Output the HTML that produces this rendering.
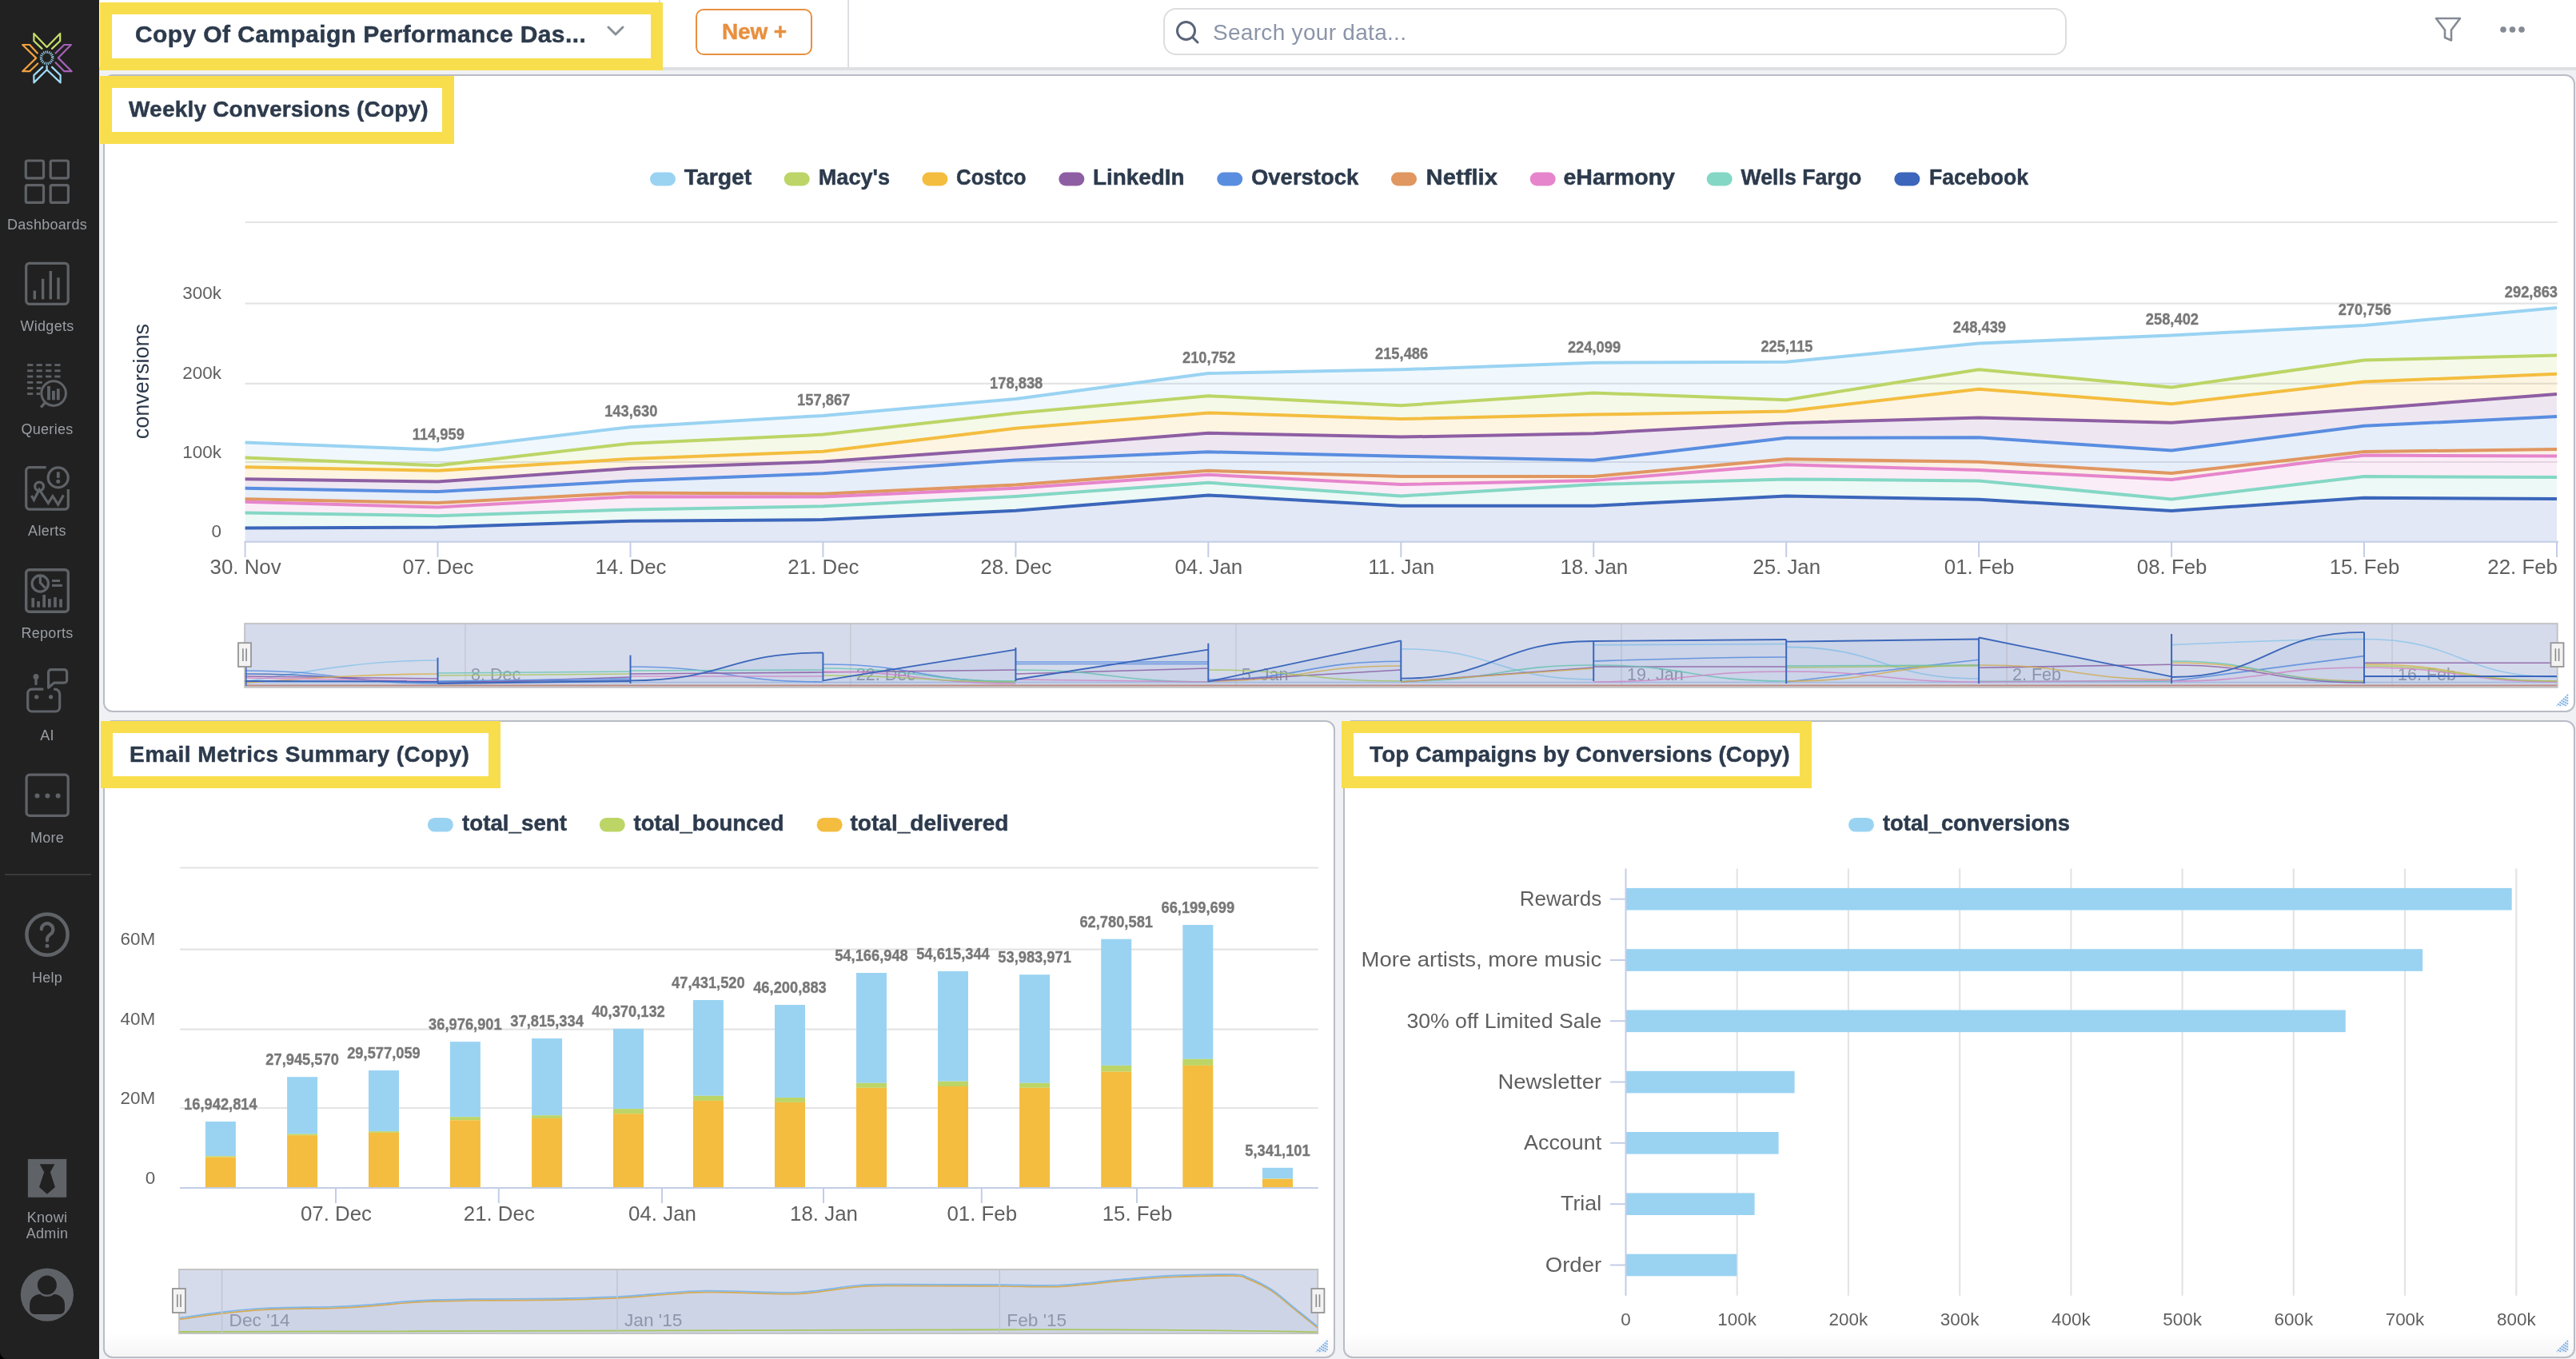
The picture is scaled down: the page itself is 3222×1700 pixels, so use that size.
<!DOCTYPE html>
<html lang="en"><head><meta charset="utf-8"><title>Copy Of Campaign Performance Dashboard</title>
<style>
html,body{margin:0;padding:0}
body{width:3222px;height:1700px;overflow:hidden;background:#f0f1f4;font-family:"Liberation Sans", Arial, sans-serif;position:relative}
.abs{position:absolute}
.gs{will-change:transform}
#side{left:0;top:0;width:124px;height:1700px;background:#212121}
#top{left:124px;top:0;width:3098px;height:84px;background:#fff}
#topsh{left:124px;top:84px;width:3098px;height:4px;background:#dfe0e4}
.widget{box-sizing:border-box;border:2px solid #b9bcc5;border-radius:12px;background:#fff}
#w2,#w3{background:linear-gradient(to bottom,#fff calc(100% - 30px),#f5f5f6 100%)}
.hl{box-sizing:border-box;border:15px solid #f8de4c;background:#fff}
.title{font-weight:700;color:#2c3a4c;white-space:nowrap;line-height:1;-webkit-text-stroke-width:0.45px}
.nav{color:#9a9fa5;font-size:18px;text-align:center;width:124px;left:-3px;line-height:20px;white-space:nowrap}
svg text{font-family:"Liberation Sans", Arial, sans-serif}

</style></head><body>
<div class="abs widget" id="w1" style="left:129px;top:93px;width:3092px;height:798px"></div>
<div class="abs widget" id="w2" style="left:129px;top:901px;width:1541px;height:798px"></div>
<div class="abs widget" id="w3" style="left:1680px;top:901px;width:1541px;height:798px"></div>
<div class="abs" id="top"></div><div class="abs" id="topsh"></div>
<div class="abs" style="left:824px;top:0;width:2px;height:84px;background:#dcdee2"></div>
<div class="abs" style="left:1060px;top:0;width:2px;height:84px;background:#dcdee2"></div>
<div class="abs hl" style="left:125.3px;top:2.5px;width:703.3000000000001px;height:85.4px"></div>
<div class="abs title gs" style="left:168.7px;top:28.3px;font-size:30px;letter-spacing:0.40px">Copy Of Campaign Performance Das...</div>
<div class="abs hl" style="left:125.3px;top:94.9px;width:442.40000000000003px;height:84.69999999999999px"></div>
<div class="abs title gs" style="left:161.4px;top:122.7px;font-size:28px;letter-spacing:0.20px">Weekly Conversions (Copy)</div>
<div class="abs hl" style="left:125.5px;top:901.6px;width:500.6px;height:84.60000000000002px"></div>
<div class="abs title gs" style="left:162px;top:929.5px;font-size:28px;letter-spacing:0.46px">Email Metrics Summary (Copy)</div>
<div class="abs hl" style="left:1677.5px;top:901.6px;width:588.6999999999998px;height:84.60000000000002px"></div>
<div class="abs title gs" style="left:1712.8px;top:929.5px;font-size:28px;letter-spacing:0.10px">Top Campaigns by Conversions (Copy)</div>
<div class="abs" style="left:870px;top:11px;width:146px;height:58px;box-sizing:border-box;border:2.5px solid #e8903f;border-radius:10px;background:#fff"></div>
<div class="abs title gs" style="left:903px;top:25.5px;font-size:28px;color:#e8903f;letter-spacing:-0.15px">New +</div>
<div class="abs" style="left:1455px;top:10px;width:1130px;height:59px;box-sizing:border-box;border:2px solid #dcdddf;border-radius:16px;background:#fff"></div>
<div class="abs gs" style="left:1517px;top:27px;font-size:28px;line-height:1;color:#8b95a9;letter-spacing:0.3px;white-space:nowrap">Search your data...</div>
<div class="abs" id="side"></div>
<div class="abs nav gs" style="top:270.7px;letter-spacing:0.3px">Dashboards</div>
<div class="abs nav gs" style="top:398.4px;letter-spacing:0.3px">Widgets</div>
<div class="abs nav gs" style="top:527.2px;letter-spacing:0.3px">Queries</div>
<div class="abs nav gs" style="top:654.3px;letter-spacing:0.3px">Alerts</div>
<div class="abs nav gs" style="top:782.2px;letter-spacing:0.3px">Reports</div>
<div class="abs nav gs" style="top:910.2px;letter-spacing:0.3px">AI</div>
<div class="abs nav gs" style="top:1038.1px;letter-spacing:0.3px">More</div>
<div class="abs nav gs" style="top:1212.7px;letter-spacing:0.3px">Help</div>
<div class="abs nav gs" style="top:1512.7px;letter-spacing:0.3px">Knowi<br>Admin</div>
<div class="abs" style="left:6px;top:1093px;width:108px;height:2px;background:#3a3a3a"></div>
<svg class="abs" style="left:0;top:0" width="3222" height="1700" viewBox="0 0 3222 1700">
<g fill="none" stroke="#8a9098" stroke-width="3" stroke-linecap="round" stroke-linejoin="round">
<path d="M761 34 L770 43 L779 34"/>
</g>
<g fill="none" stroke="#5a6478" stroke-width="3" stroke-linecap="round"><circle cx="1483.5" cy="38.5" r="11"/><path d="M1491.5 46.5 L1498 53"/></g>
<path d="M3047 23 H3077 L3066 37.5 V50.5 L3058 47 V37.5 Z" fill="none" stroke="#858b94" stroke-width="2.6" stroke-linejoin="round"/>
<g fill="#858b94"><circle cx="3131" cy="37" r="3.8"/><circle cx="3142.5" cy="37" r="3.8"/><circle cx="3154" cy="37" r="3.8"/></g>
<g fill="none" stroke-width="2.2" stroke-linejoin="round" stroke-linecap="round">
<path d="M52.5 60.9 L42.4 51.2 V41.9 L58.6 58.9 L75.2 41.9 V51.2 L65 60.9" stroke="#c6df6a"/>
<path d="M46.8 66.5 L37.1 56 H28.2 L45.2 72.6 L28.2 89.2 H37.1 L47.2 79.5" stroke="#f2a13e"/>
<path d="M69.5 66.5 L80.4 56 H88.9 L72.7 72.4 L89.7 89.2 H80.4 L69.5 78.2" stroke="#a561b7"/>
<path d="M53.3 83.9 L42.4 94.1 V103.4 L58.6 87.2 L75.6 103.4 V94.1 L65 83.9 M58.6 82.7 V87.2" stroke="#a0dcf7"/>
<circle cx="58.6" cy="72.3" r="7.2" stroke="#a0dcf7" stroke-width="3.4" stroke-dasharray="1.1 1.16" stroke-linecap="butt"/>
</g>
<g fill="none" stroke="#5f6368" stroke-width="3.2" stroke-linejoin="round" stroke-linecap="butt">
<rect x="32.3" y="201" width="22.2" height="21.8" rx="2"/>
<rect x="63.2" y="201" width="22.2" height="21.8" rx="2"/>
<rect x="32.3" y="231.6" width="22.2" height="21.8" rx="2"/>
<rect x="63.2" y="231.6" width="22.2" height="21.8" rx="2"/>
<rect x="32.7" y="329.3" width="52.5" height="51" rx="4"/>
</g>
<g fill="#5f6368">
<rect x="41.6" y="363.5" width="3.4" height="10.9"/>
<rect x="51.9" y="348.8" width="3.4" height="25.6"/>
<rect x="61.6" y="339" width="3.4" height="35.4"/>
<rect x="71.3" y="347.3" width="3.4" height="27.1"/>
<rect x="34.1" y="455.2" width="7.2" height="2.8"/>
<rect x="45.6" y="455.2" width="7.2" height="2.8"/>
<rect x="57.1" y="455.2" width="7.2" height="2.8"/>
<rect x="68.3" y="455.2" width="7.2" height="2.8"/>
<rect x="34.1" y="462.4" width="7.2" height="2.8"/>
<rect x="45.6" y="462.4" width="7.2" height="2.8"/>
<rect x="57.1" y="462.4" width="7.2" height="2.8"/>
<rect x="68.3" y="462.4" width="7.2" height="2.8"/>
<rect x="34.1" y="469.6" width="7.2" height="2.8"/>
<rect x="45.6" y="469.6" width="7.2" height="2.8"/>
<rect x="57.1" y="469.6" width="7.2" height="2.8"/>
<rect x="68.3" y="469.6" width="7.2" height="2.8"/>
<rect x="34.1" y="477" width="7.2" height="2.8"/>
<rect x="45.6" y="477" width="7.2" height="2.8"/>
<rect x="34.1" y="484.1" width="7.2" height="2.8"/>
<rect x="45.6" y="484.1" width="5.5" height="2.8"/>
<rect x="34.1" y="491.2" width="7.2" height="2.8"/>
<rect x="45.6" y="491.2" width="4.5" height="2.8"/>
<rect x="59.1" y="483" width="3.8" height="17.3"/>
<rect x="65" y="488.9" width="3.8" height="11.4"/>
<rect x="70.9" y="486.2" width="3.8" height="14.1"/>
</g>
<g fill="none" stroke="#5f6368" stroke-width="3" stroke-linecap="butt"><circle cx="67.1" cy="492.1" r="15.3"/><path d="M56.6 503.4 L51.2 509.6" stroke-width="3.4"/></g>
<g fill="none" stroke="#5f6368" stroke-width="3.2" stroke-linejoin="miter" stroke-linecap="butt">
<path d="M57.7 584.7 H36.7 a4 4 0 0 0 -4 4 V633.1 a4 4 0 0 0 4 4 H81.3 a4 4 0 0 0 4 -4 V612.1"/>
<circle cx="72.7" cy="597.4" r="12.5"/><circle cx="49.1" cy="608.5" r="5.4"/>
<path d="M39.4 620 L42.4 625.3 L49.1 612.4 L60.3 629.4 L65.9 620.6 L72.7 631.2 L79.4 619.4"/>
</g>
<g fill="#5f6368"><rect x="70.9" y="590.3" width="3.8" height="7.5"/><circle cx="72.7" cy="602.2" r="2.5"/></g>
<g fill="none" stroke="#5f6368" stroke-width="3.4" stroke-linejoin="miter" stroke-linecap="butt">
<rect x="32.7" y="712.7" width="52.6" height="52.6" rx="4"/><circle cx="50.3" cy="730" r="10.2" stroke-width="3.2"/><path d="M50.3 720 V728.8 L56.5 735.5" stroke-width="3.2"/>
</g>
<g fill="#5f6368"><rect x="65" y="725" width="10" height="3"/><rect x="65" y="730.9" width="13" height="3"/>
<rect x="39.4" y="748" width="3.7" height="11.7"/>
<rect x="46.2" y="752.1" width="3.7" height="7.6"/>
<rect x="53.3" y="744.1" width="3.7" height="15.6"/>
<rect x="60" y="749.1" width="3.7" height="10.6"/>
<rect x="67.1" y="747.1" width="3.7" height="12.6"/>
<rect x="74.2" y="749.4" width="3.7" height="10.3"/>
</g>
<g fill="none" stroke="#5f6368" stroke-width="3.2" stroke-linejoin="round" stroke-linecap="round">
<path d="M53 862.1 H40 a5.3 5.3 0 0 0 -5.3 5.3 V884.7 a5.3 5.3 0 0 0 5.3 5.3 H69.4 a5.3 5.3 0 0 0 5.3 -5.3 V868.4 a6.3 6.3 0 0 0 -6.3 -6.3"/>
<path d="M45 846.5 V855.6"/>
<path d="M60.6 860.3 V840.9 a3.2 3.2 0 0 1 3.2 -3.2 H80.4 a3.2 3.2 0 0 1 3.2 3.2 V850.9 a3.2 3.2 0 0 1 -3.2 3.2 H67.7 Z"/>
</g>
<g fill="#5f6368"><circle cx="45" cy="846.5" r="3.5"/><circle cx="45.7" cy="871.8" r="2.6"/><circle cx="63.6" cy="871.8" r="2.6"/></g>
<rect x="33.1" y="969.2" width="52.1" height="51.2" rx="4" fill="none" stroke="#5f6368" stroke-width="3.2"/>
<g fill="#5f6368"><circle cx="46.5" cy="995.6" r="3"/><circle cx="59.4" cy="995.6" r="3"/><circle cx="72.6" cy="995.6" r="3"/></g>
<g fill="none" stroke="#5f6368" stroke-linecap="round"><circle cx="59" cy="1169.1" r="25.6" stroke-width="4.5"/>
<path d="M51.8 1162.4 a7.3 7.3 0 1 1 11.6 6 c-2.6 1.9 -4.4 3.3 -4.4 6.6 V1176.4" stroke-width="4.2"/></g>
<circle cx="59" cy="1183.3" r="2.5" fill="#5f6368"/>
<rect x="34.9" y="1449.9" width="48.3" height="47.9" fill="#5f6368"/>
<path d="M49.7 1456.3 H68.4 L62.9 1466.2 L68.9 1485 L58.9 1493.8 L49 1485 L55.2 1466.2 Z" fill="#212121"/>
<circle cx="58.9" cy="1619.6" r="33.1" fill="#5f6368"/>
<path d="M37.1 1643.9 V1632 a13 13 0 0 1 13 -13 H68 a13 13 0 0 1 13 13 V1638 a6 6 0 0 1 -6 5.9 H43 a6 6 0 0 1 -5.9 -5.9 Z" fill="#212121"/>
<circle cx="58.9" cy="1607.5" r="13.2" fill="#212121" stroke="#5f6368" stroke-width="2.4"/>
<g id="chart1">
<path d="M306.6 278 H3199" stroke="#e4e4e6" stroke-width="2.2" fill="none"/>
<path d="M306.6 379.7 H3199" stroke="#e4e4e6" stroke-width="2.2" fill="none"/>
<path d="M306.6 479.8 H3199" stroke="#e4e4e6" stroke-width="2.2" fill="none"/>
<path d="M306.6 578 H3199" stroke="#e4e4e6" stroke-width="2.2" fill="none"/>
<rect x="813" y="215.4" width="32" height="17" rx="8.5" fill="#9ad3f2"/>
<text x="855.7" y="231.0" font-size="28" font-weight="700" stroke="#2c3a4c" stroke-width="0.5" text-anchor="start" fill="#2c3a4c" textLength="84.6" lengthAdjust="spacingAndGlyphs">Target</text>
<rect x="980.7" y="215.4" width="32" height="17" rx="8.5" fill="#bcd566"/>
<text x="1023.8" y="231.0" font-size="28" font-weight="700" stroke="#2c3a4c" stroke-width="0.5" text-anchor="start" fill="#2c3a4c" textLength="89.2" lengthAdjust="spacingAndGlyphs">Macy's</text>
<rect x="1153.4" y="215.4" width="32" height="17" rx="8.5" fill="#f4bd3f"/>
<text x="1196.1" y="231.0" font-size="28" font-weight="700" stroke="#2c3a4c" stroke-width="0.5" text-anchor="start" fill="#2c3a4c" textLength="87.4" lengthAdjust="spacingAndGlyphs">Costco</text>
<rect x="1324.3" y="215.4" width="32" height="17" rx="8.5" fill="#8e5ea3"/>
<text x="1367.0" y="231.0" font-size="28" font-weight="700" stroke="#2c3a4c" stroke-width="0.5" text-anchor="start" fill="#2c3a4c" textLength="114.5" lengthAdjust="spacingAndGlyphs">LinkedIn</text>
<rect x="1522.2" y="215.4" width="32" height="17" rx="8.5" fill="#598de0"/>
<text x="1565.0" y="231.0" font-size="28" font-weight="700" stroke="#2c3a4c" stroke-width="0.5" text-anchor="start" fill="#2c3a4c" textLength="134.3" lengthAdjust="spacingAndGlyphs">Overstock</text>
<rect x="1740" y="215.4" width="32" height="17" rx="8.5" fill="#e09760"/>
<text x="1783.5" y="231.0" font-size="28" font-weight="700" stroke="#2c3a4c" stroke-width="0.5" text-anchor="start" fill="#2c3a4c" textLength="89.5" lengthAdjust="spacingAndGlyphs">Netflix</text>
<rect x="1913.7" y="215.4" width="32" height="17" rx="8.5" fill="#e685cc"/>
<text x="1955.4" y="231.0" font-size="28" font-weight="700" stroke="#2c3a4c" stroke-width="0.5" text-anchor="start" fill="#2c3a4c" textLength="139.6" lengthAdjust="spacingAndGlyphs">eHarmony</text>
<rect x="2134.7" y="215.4" width="32" height="17" rx="8.5" fill="#84d7c5"/>
<text x="2177.5" y="231.0" font-size="28" font-weight="700" stroke="#2c3a4c" stroke-width="0.5" text-anchor="start" fill="#2c3a4c" textLength="150.9" lengthAdjust="spacingAndGlyphs">Wells Fargo</text>
<rect x="2369.4" y="215.4" width="32" height="17" rx="8.5" fill="#3b66bb"/>
<text x="2412.9" y="231.0" font-size="28" font-weight="700" stroke="#2c3a4c" stroke-width="0.5" text-anchor="start" fill="#2c3a4c" textLength="124.1" lengthAdjust="spacingAndGlyphs">Facebook</text>
<path d="M306.6 553.4 L547.5 562.8 L788.5 534.2 L1029.4 519.9 L1270.4 499.0 L1511.3 467.0 L1752.3 462.3 L1993.2 453.7 L2234.2 452.7 L2475.1 429.4 L2716.1 419.4 L2957.0 407.0 L3198.0 384.9 L3198.0 444.5 L2957.0 450.6 L2716.1 484.6 L2475.1 462.3 L2234.2 500.2 L1993.2 491.4 L1752.3 507.2 L1511.3 495.2 L1270.4 516.8 L1029.4 543.6 L788.5 554.8 L547.5 582.3 L306.6 572.5 Z" fill="#9ad3f2" fill-opacity="0.15"/>
<path d="M306.6 572.5 L547.5 582.3 L788.5 554.8 L1029.4 543.6 L1270.4 516.8 L1511.3 495.2 L1752.3 507.2 L1993.2 491.4 L2234.2 500.2 L2475.1 462.3 L2716.1 484.6 L2957.0 450.6 L3198.0 444.5 L3198.0 467.8 L2957.0 477.6 L2716.1 505.2 L2475.1 486.7 L2234.2 514.4 L1993.2 518.6 L1752.3 524.0 L1511.3 516.4 L1270.4 535.8 L1029.4 564.8 L788.5 573.9 L547.5 588.8 L306.6 584.2 Z" fill="#bcd566" fill-opacity="0.15"/>
<path d="M306.6 584.2 L547.5 588.8 L788.5 573.9 L1029.4 564.8 L1270.4 535.8 L1511.3 516.4 L1752.3 524.0 L1993.2 518.6 L2234.2 514.4 L2475.1 486.7 L2716.1 505.2 L2957.0 477.6 L3198.0 467.8 L3198.0 493.0 L2957.0 511.6 L2716.1 528.8 L2475.1 522.6 L2234.2 529.2 L1993.2 542.2 L1752.3 546.6 L1511.3 541.8 L1270.4 560.4 L1029.4 577.6 L788.5 585.8 L547.5 602.6 L306.6 599.3 Z" fill="#f4bd3f" fill-opacity="0.15"/>
<path d="M306.6 599.3 L547.5 602.6 L788.5 585.8 L1029.4 577.6 L1270.4 560.4 L1511.3 541.8 L1752.3 546.6 L1993.2 542.2 L2234.2 529.2 L2475.1 522.6 L2716.1 528.8 L2957.0 511.6 L3198.0 493.0 L3198.0 521.1 L2957.0 532.8 L2716.1 563.4 L2475.1 547.3 L2234.2 547.8 L1993.2 575.7 L1752.3 570.8 L1511.3 565.3 L1270.4 575.4 L1029.4 592.2 L788.5 601.6 L547.5 615.1 L306.6 610.7 Z" fill="#8e5ea3" fill-opacity="0.15"/>
<path d="M306.6 610.7 L547.5 615.1 L788.5 601.6 L1029.4 592.2 L1270.4 575.4 L1511.3 565.3 L1752.3 570.8 L1993.2 575.7 L2234.2 547.8 L2475.1 547.3 L2716.1 563.4 L2957.0 532.8 L3198.0 521.1 L3198.0 561.9 L2957.0 565.1 L2716.1 591.9 L2475.1 577.8 L2234.2 574.3 L1993.2 596.0 L1752.3 596.0 L1511.3 588.8 L1270.4 606.6 L1029.4 617.8 L788.5 616.5 L547.5 629.1 L306.6 624.2 Z" fill="#598de0" fill-opacity="0.15"/>
<path d="M306.6 624.2 L547.5 629.1 L788.5 616.5 L1029.4 617.8 L1270.4 606.6 L1511.3 588.8 L1752.3 596.0 L1993.2 596.0 L2234.2 574.3 L2475.1 577.8 L2716.1 591.9 L2957.0 565.1 L3198.0 561.9 L3198.0 570.6 L2957.0 569.6 L2716.1 600.1 L2475.1 588.1 L2234.2 581.2 L1993.2 600.9 L1752.3 606.1 L1511.3 593.8 L1270.4 610.7 L1029.4 621.6 L788.5 621.2 L547.5 634.5 L306.6 627.7 Z" fill="#e09760" fill-opacity="0.15"/>
<path d="M306.6 627.7 L547.5 634.5 L788.5 621.2 L1029.4 621.6 L1270.4 610.7 L1511.3 593.8 L1752.3 606.1 L1993.2 600.9 L2234.2 581.2 L2475.1 588.1 L2716.1 600.1 L2957.0 569.6 L3198.0 570.6 L3198.0 597.1 L2957.0 596.1 L2716.1 624.5 L2475.1 601.4 L2234.2 599.4 L1993.2 606.1 L1752.3 620.5 L1511.3 603.8 L1270.4 621.0 L1029.4 633.3 L788.5 637.5 L547.5 645.2 L306.6 641.5 Z" fill="#e685cc" fill-opacity="0.15"/>
<path d="M306.6 641.5 L547.5 645.2 L788.5 637.5 L1029.4 633.3 L1270.4 621.0 L1511.3 603.8 L1752.3 620.5 L1993.2 606.1 L2234.2 599.4 L2475.1 601.4 L2716.1 624.5 L2957.0 596.1 L3198.0 597.1 L3198.0 623.9 L2957.0 622.8 L2716.1 638.9 L2475.1 624.8 L2234.2 620.5 L1993.2 632.7 L1752.3 632.7 L1511.3 619.4 L1270.4 638.7 L1029.4 650.1 L788.5 651.7 L547.5 659.6 L306.6 660.6 Z" fill="#84d7c5" fill-opacity="0.15"/>
<path d="M306.6 660.6 L547.5 659.6 L788.5 651.7 L1029.4 650.1 L1270.4 638.7 L1511.3 619.4 L1752.3 632.7 L1993.2 632.7 L2234.2 620.5 L2475.1 624.8 L2716.1 638.9 L2957.0 622.8 L3198.0 623.9 L3198.0 677.8 L2957.0 677.8 L2716.1 677.8 L2475.1 677.8 L2234.2 677.8 L1993.2 677.8 L1752.3 677.8 L1511.3 677.8 L1270.4 677.8 L1029.4 677.8 L788.5 677.8 L547.5 677.8 L306.6 677.8 Z" fill="#3b66bb" fill-opacity="0.15"/>
<path d="M306.6 553.4 L547.5 562.8 L788.5 534.2 L1029.4 519.9 L1270.4 499.0 L1511.3 467.0 L1752.3 462.3 L1993.2 453.7 L2234.2 452.7 L2475.1 429.4 L2716.1 419.4 L2957.0 407.0 L3198.0 384.9" fill="none" stroke="#9ad3f2" stroke-width="4" stroke-linejoin="round" stroke-linecap="butt"/>
<path d="M306.6 572.5 L547.5 582.3 L788.5 554.8 L1029.4 543.6 L1270.4 516.8 L1511.3 495.2 L1752.3 507.2 L1993.2 491.4 L2234.2 500.2 L2475.1 462.3 L2716.1 484.6 L2957.0 450.6 L3198.0 444.5" fill="none" stroke="#bcd566" stroke-width="4" stroke-linejoin="round" stroke-linecap="butt"/>
<path d="M306.6 584.2 L547.5 588.8 L788.5 573.9 L1029.4 564.8 L1270.4 535.8 L1511.3 516.4 L1752.3 524.0 L1993.2 518.6 L2234.2 514.4 L2475.1 486.7 L2716.1 505.2 L2957.0 477.6 L3198.0 467.8" fill="none" stroke="#f4bd3f" stroke-width="4" stroke-linejoin="round" stroke-linecap="butt"/>
<path d="M306.6 599.3 L547.5 602.6 L788.5 585.8 L1029.4 577.6 L1270.4 560.4 L1511.3 541.8 L1752.3 546.6 L1993.2 542.2 L2234.2 529.2 L2475.1 522.6 L2716.1 528.8 L2957.0 511.6 L3198.0 493.0" fill="none" stroke="#8e5ea3" stroke-width="4" stroke-linejoin="round" stroke-linecap="butt"/>
<path d="M306.6 610.7 L547.5 615.1 L788.5 601.6 L1029.4 592.2 L1270.4 575.4 L1511.3 565.3 L1752.3 570.8 L1993.2 575.7 L2234.2 547.8 L2475.1 547.3 L2716.1 563.4 L2957.0 532.8 L3198.0 521.1" fill="none" stroke="#598de0" stroke-width="4" stroke-linejoin="round" stroke-linecap="butt"/>
<path d="M306.6 624.2 L547.5 629.1 L788.5 616.5 L1029.4 617.8 L1270.4 606.6 L1511.3 588.8 L1752.3 596.0 L1993.2 596.0 L2234.2 574.3 L2475.1 577.8 L2716.1 591.9 L2957.0 565.1 L3198.0 561.9" fill="none" stroke="#e09760" stroke-width="4" stroke-linejoin="round" stroke-linecap="butt"/>
<path d="M306.6 627.7 L547.5 634.5 L788.5 621.2 L1029.4 621.6 L1270.4 610.7 L1511.3 593.8 L1752.3 606.1 L1993.2 600.9 L2234.2 581.2 L2475.1 588.1 L2716.1 600.1 L2957.0 569.6 L3198.0 570.6" fill="none" stroke="#e685cc" stroke-width="4" stroke-linejoin="round" stroke-linecap="butt"/>
<path d="M306.6 641.5 L547.5 645.2 L788.5 637.5 L1029.4 633.3 L1270.4 621.0 L1511.3 603.8 L1752.3 620.5 L1993.2 606.1 L2234.2 599.4 L2475.1 601.4 L2716.1 624.5 L2957.0 596.1 L3198.0 597.1" fill="none" stroke="#84d7c5" stroke-width="4" stroke-linejoin="round" stroke-linecap="butt"/>
<path d="M306.6 660.6 L547.5 659.6 L788.5 651.7 L1029.4 650.1 L1270.4 638.7 L1511.3 619.4 L1752.3 632.7 L1993.2 632.7 L2234.2 620.5 L2475.1 624.8 L2716.1 638.9 L2957.0 622.8 L3198.0 623.9" fill="none" stroke="#3b66bb" stroke-width="4" stroke-linejoin="round" stroke-linecap="butt"/>
<path d="M305.6 677.8 H3200" stroke="#c3cde6" stroke-width="2" fill="none"/>
<path d="M306.6 677.8 V697" stroke="#c3cde6" stroke-width="2" fill="none"/>
<path d="M547.5 677.8 V697" stroke="#c3cde6" stroke-width="2" fill="none"/>
<path d="M788.5 677.8 V697" stroke="#c3cde6" stroke-width="2" fill="none"/>
<path d="M1029.4 677.8 V697" stroke="#c3cde6" stroke-width="2" fill="none"/>
<path d="M1270.4 677.8 V697" stroke="#c3cde6" stroke-width="2" fill="none"/>
<path d="M1511.3 677.8 V697" stroke="#c3cde6" stroke-width="2" fill="none"/>
<path d="M1752.3 677.8 V697" stroke="#c3cde6" stroke-width="2" fill="none"/>
<path d="M1993.2 677.8 V697" stroke="#c3cde6" stroke-width="2" fill="none"/>
<path d="M2234.2 677.8 V697" stroke="#c3cde6" stroke-width="2" fill="none"/>
<path d="M2475.1 677.8 V697" stroke="#c3cde6" stroke-width="2" fill="none"/>
<path d="M2716.1 677.8 V697" stroke="#c3cde6" stroke-width="2" fill="none"/>
<path d="M2957.0 677.8 V697" stroke="#c3cde6" stroke-width="2" fill="none"/>
<path d="M3198.0 677.8 V697" stroke="#c3cde6" stroke-width="2" fill="none"/>
<text x="277.0" y="374.2" font-size="22" text-anchor="end" fill="#5f5f5f" textLength="48.7" lengthAdjust="spacingAndGlyphs">300k</text>
<text x="277.0" y="474.3" font-size="22" text-anchor="end" fill="#5f5f5f" textLength="48.7" lengthAdjust="spacingAndGlyphs">200k</text>
<text x="277.0" y="572.5" font-size="22" text-anchor="end" fill="#5f5f5f" textLength="48.7" lengthAdjust="spacingAndGlyphs">100k</text>
<text x="277.0" y="672.3" font-size="22" text-anchor="end" fill="#5f5f5f" textLength="12.5" lengthAdjust="spacingAndGlyphs">0</text>
<text x="307.1" y="718.2" font-size="25" text-anchor="middle" fill="#5f5f5f" textLength="89.1" lengthAdjust="spacingAndGlyphs">30. Nov</text>
<text x="548.0" y="718.2" font-size="25" text-anchor="middle" fill="#5f5f5f" textLength="89.1" lengthAdjust="spacingAndGlyphs">07. Dec</text>
<text x="789.0" y="718.2" font-size="25" text-anchor="middle" fill="#5f5f5f" textLength="89.1" lengthAdjust="spacingAndGlyphs">14. Dec</text>
<text x="1029.9" y="718.2" font-size="25" text-anchor="middle" fill="#5f5f5f" textLength="89.1" lengthAdjust="spacingAndGlyphs">21. Dec</text>
<text x="1270.9" y="718.2" font-size="25" text-anchor="middle" fill="#5f5f5f" textLength="89.1" lengthAdjust="spacingAndGlyphs">28. Dec</text>
<text x="1511.8" y="718.2" font-size="25" text-anchor="middle" fill="#5f5f5f" textLength="84.8" lengthAdjust="spacingAndGlyphs">04. Jan</text>
<text x="1752.8" y="718.2" font-size="25" text-anchor="middle" fill="#5f5f5f" textLength="82.9" lengthAdjust="spacingAndGlyphs">11. Jan</text>
<text x="1993.8" y="718.2" font-size="25" text-anchor="middle" fill="#5f5f5f" textLength="84.8" lengthAdjust="spacingAndGlyphs">18. Jan</text>
<text x="2234.7" y="718.2" font-size="25" text-anchor="middle" fill="#5f5f5f" textLength="84.8" lengthAdjust="spacingAndGlyphs">25. Jan</text>
<text x="2475.6" y="718.2" font-size="25" text-anchor="middle" fill="#5f5f5f" textLength="87.7" lengthAdjust="spacingAndGlyphs">01. Feb</text>
<text x="2716.6" y="718.2" font-size="25" text-anchor="middle" fill="#5f5f5f" textLength="87.7" lengthAdjust="spacingAndGlyphs">08. Feb</text>
<text x="2957.5" y="718.2" font-size="25" text-anchor="middle" fill="#5f5f5f" textLength="87.7" lengthAdjust="spacingAndGlyphs">15. Feb</text>
<text x="3199.0" y="718.2" font-size="25" text-anchor="end" fill="#5f5f5f" textLength="87.7" lengthAdjust="spacingAndGlyphs">22. Feb</text>
<text transform="translate(186.4 477.1) rotate(-90)" font-size="27" text-anchor="middle" fill="#2c3a4c" textLength="144.4" lengthAdjust="spacingAndGlyphs">conversions</text>
<text x="548.3" y="549.6" font-size="20" font-weight="700" stroke="#777777" stroke-width="0.35" text-anchor="middle" fill="#777777" textLength="65.1" lengthAdjust="spacingAndGlyphs">114,959</text>
<text x="789.3" y="521.0" font-size="20" font-weight="700" stroke="#777777" stroke-width="0.35" text-anchor="middle" fill="#777777" textLength="66.2" lengthAdjust="spacingAndGlyphs">143,630</text>
<text x="1030.2" y="506.7" font-size="20" font-weight="700" stroke="#777777" stroke-width="0.35" text-anchor="middle" fill="#777777" textLength="66.2" lengthAdjust="spacingAndGlyphs">157,867</text>
<text x="1271.2" y="485.8" font-size="20" font-weight="700" stroke="#777777" stroke-width="0.35" text-anchor="middle" fill="#777777" textLength="66.2" lengthAdjust="spacingAndGlyphs">178,838</text>
<text x="1512.1" y="453.8" font-size="20" font-weight="700" stroke="#777777" stroke-width="0.35" text-anchor="middle" fill="#777777" textLength="66.2" lengthAdjust="spacingAndGlyphs">210,752</text>
<text x="1753.1" y="449.1" font-size="20" font-weight="700" stroke="#777777" stroke-width="0.35" text-anchor="middle" fill="#777777" textLength="66.2" lengthAdjust="spacingAndGlyphs">215,486</text>
<text x="1994.0" y="440.5" font-size="20" font-weight="700" stroke="#777777" stroke-width="0.35" text-anchor="middle" fill="#777777" textLength="66.2" lengthAdjust="spacingAndGlyphs">224,099</text>
<text x="2235.0" y="439.5" font-size="20" font-weight="700" stroke="#777777" stroke-width="0.35" text-anchor="middle" fill="#777777" textLength="65.1" lengthAdjust="spacingAndGlyphs">225,115</text>
<text x="2475.9" y="416.2" font-size="20" font-weight="700" stroke="#777777" stroke-width="0.35" text-anchor="middle" fill="#777777" textLength="66.2" lengthAdjust="spacingAndGlyphs">248,439</text>
<text x="2716.9" y="406.2" font-size="20" font-weight="700" stroke="#777777" stroke-width="0.35" text-anchor="middle" fill="#777777" textLength="66.2" lengthAdjust="spacingAndGlyphs">258,402</text>
<text x="2957.8" y="393.8" font-size="20" font-weight="700" stroke="#777777" stroke-width="0.35" text-anchor="middle" fill="#777777" textLength="66.2" lengthAdjust="spacingAndGlyphs">270,756</text>
<text x="3199.0" y="371.7" font-size="20" font-weight="700" stroke="#777777" stroke-width="0.35" text-anchor="end" fill="#777777" textLength="66.2" lengthAdjust="spacingAndGlyphs">292,863</text>
<rect x="306.1" y="780.1" width="2892.6" height="79.7" fill="#d5dbeb" stroke="#c4c4c5" stroke-width="2"/>
<path d="M582 780 V859" stroke="#c6c9d3" stroke-width="1.5"/>
<text x="589.0" y="851.0" font-size="22" text-anchor="start" fill="#9197ab" textLength="62.3" lengthAdjust="spacingAndGlyphs">8. Dec</text>
<path d="M1063.8 780 V859" stroke="#c6c9d3" stroke-width="1.5"/>
<text x="1070.8" y="851.0" font-size="22" text-anchor="start" fill="#9197ab" textLength="74.3" lengthAdjust="spacingAndGlyphs">22. Dec</text>
<path d="M1545.8 780 V859" stroke="#c6c9d3" stroke-width="1.5"/>
<text x="1552.8" y="851.0" font-size="22" text-anchor="start" fill="#9197ab" textLength="58.7" lengthAdjust="spacingAndGlyphs">5. Jan</text>
<path d="M2028 780 V859" stroke="#c6c9d3" stroke-width="1.5"/>
<text x="2035.0" y="851.0" font-size="22" text-anchor="start" fill="#9197ab" textLength="70.7" lengthAdjust="spacingAndGlyphs">19. Jan</text>
<path d="M2510 780 V859" stroke="#c6c9d3" stroke-width="1.5"/>
<text x="2517.0" y="851.0" font-size="22" text-anchor="start" fill="#9197ab" textLength="61.1" lengthAdjust="spacingAndGlyphs">2. Feb</text>
<path d="M2992 780 V859" stroke="#c6c9d3" stroke-width="1.5"/>
<text x="2999.0" y="851.0" font-size="22" text-anchor="start" fill="#9197ab" textLength="73.1" lengthAdjust="spacingAndGlyphs">16. Feb</text>
<path d="M307 857.6 H3198" stroke="#c48f7e" stroke-width="2"/>
<path d="M306.6 853.5 H3198" stroke="#9fb7e0" stroke-width="1.6" stroke-opacity="0.8"/>
<path d="M306.6 852.6 C386.6 839.3 457.5 826.0 547.5 826.0" fill="none" stroke="#8cc4ea" stroke-width="1.6" stroke-opacity="0.85"/>
<path d="M306.6 839.0 C427.1 839.0 427.1 855.0 547.5 855.0" fill="none" stroke="#598de0" stroke-width="1.6" stroke-opacity="0.85"/>
<path d="M306.6 843.0 C427.1 843.0 427.1 853.0 547.5 853.0" fill="none" stroke="#3b66bb" stroke-width="1.6" stroke-opacity="0.85"/>
<path d="M306.6 846.0 L547.5 849.0" fill="none" stroke="#8e5ea3" stroke-width="1.6" stroke-opacity="0.85"/>
<path d="M306.6 854.0 C386.6 848.5 457.5 843.0 547.5 843.0" fill="none" stroke="#d8b04e" stroke-width="1.6" stroke-opacity="0.85"/>
<path d="M306.6 848.0 L547.5 852.0" fill="none" stroke="#d78ac8" stroke-width="1.6" stroke-opacity="0.85"/>
<path d="M547.5 853.0 L788.5 851.0" fill="none" stroke="#3b66bb" stroke-width="1.6" stroke-opacity="0.85"/>
<path d="M547.5 842.0 L788.5 840.0" fill="none" stroke="#6cc7b5" stroke-width="1.6" stroke-opacity="0.85"/>
<path d="M547.5 845.0 L788.5 843.0" fill="none" stroke="#a9c760" stroke-width="1.6" stroke-opacity="0.85"/>
<path d="M547.5 855.0 L788.5 847.0" fill="none" stroke="#8e5ea3" stroke-width="1.6" stroke-opacity="0.85"/>
<path d="M547.5 852.0 L788.5 849.0" fill="none" stroke="#598de0" stroke-width="1.6" stroke-opacity="0.85"/>
<path d="M788.5 834.0 C909.0 834.0 909.0 853.0 1029.4 853.0" fill="none" stroke="#598de0" stroke-width="1.6" stroke-opacity="0.85"/>
<path d="M788.5 839.0 L1029.4 838.0" fill="none" stroke="#6cc7b5" stroke-width="1.6" stroke-opacity="0.85"/>
<path d="M788.5 843.0 L1029.4 841.0" fill="none" stroke="#8e5ea3" stroke-width="1.6" stroke-opacity="0.85"/>
<path d="M788.5 846.0 L1029.4 846.0" fill="none" stroke="#d78ac8" stroke-width="1.6" stroke-opacity="0.85"/>
<path d="M1029.4 831.0 C1149.9 831.0 1149.9 853.0 1270.4 853.0" fill="none" stroke="#598de0" stroke-width="1.6" stroke-opacity="0.85"/>
<path d="M1029.4 836.0 C1149.9 836.0 1149.9 852.0 1270.4 852.0" fill="none" stroke="#6cc7b5" stroke-width="1.6" stroke-opacity="0.85"/>
<path d="M1029.4 841.0 L1270.4 838.0" fill="none" stroke="#8e5ea3" stroke-width="1.6" stroke-opacity="0.85"/>
<path d="M1029.4 840.0 C1149.9 840.0 1149.9 855.0 1270.4 855.0" fill="none" stroke="#d78ac8" stroke-width="1.6" stroke-opacity="0.85"/>
<path d="M1029.4 845.0 C1149.9 845.0 1149.9 853.0 1270.4 853.0" fill="none" stroke="#a9c760" stroke-width="1.6" stroke-opacity="0.85"/>
<path d="M1270.4 828.0 L1511.3 828.0" fill="none" stroke="#598de0" stroke-width="1.6" stroke-opacity="0.85"/>
<path d="M1270.4 830.5 L1511.3 830.5" fill="none" stroke="#598de0" stroke-width="1.6" stroke-opacity="0.85"/>
<path d="M1270.4 843.0 L1511.3 836.0" fill="none" stroke="#8e5ea3" stroke-width="1.6" stroke-opacity="0.85"/>
<path d="M1270.4 838.0 C1390.9 838.0 1390.9 853.0 1511.3 853.0" fill="none" stroke="#6cc7b5" stroke-width="1.6" stroke-opacity="0.85"/>
<path d="M1270.4 850.0 L1511.3 853.0" fill="none" stroke="#d78ac8" stroke-width="1.6" stroke-opacity="0.85"/>
<path d="M1511.3 850.0 C1631.8 850.0 1631.8 827.3 1752.3 827.3" fill="none" stroke="#598de0" stroke-width="1.6" stroke-opacity="0.85"/>
<path d="M1511.3 852.0 C1631.8 852.0 1631.8 833.0 1752.3 833.0" fill="none" stroke="#d8b04e" stroke-width="1.6" stroke-opacity="0.85"/>
<path d="M1511.3 852.0 L1752.3 838.0" fill="none" stroke="#8e5ea3" stroke-width="1.6" stroke-opacity="0.85"/>
<path d="M1511.3 838.0 C1631.8 838.0 1631.8 852.0 1752.3 852.0" fill="none" stroke="#a9c760" stroke-width="1.6" stroke-opacity="0.85"/>
<path d="M1752.3 811.8 C1872.8 811.8 1872.8 850.0 1993.2 850.0" fill="none" stroke="#8cc4ea" stroke-width="1.6" stroke-opacity="0.85"/>
<path d="M1752.3 852.0 C1872.8 852.0 1872.8 832.0 1993.2 832.0" fill="none" stroke="#6cc7b5" stroke-width="1.6" stroke-opacity="0.85"/>
<path d="M1752.3 853.0 L1993.2 835.0" fill="none" stroke="#8e5ea3" stroke-width="1.6" stroke-opacity="0.85"/>
<path d="M1752.3 853.0 L1993.2 836.0" fill="none" stroke="#d8b04e" stroke-width="1.6" stroke-opacity="0.85"/>
<path d="M1993.2 806.8 L2234.2 805.5" fill="none" stroke="#8cc4ea" stroke-width="1.6" stroke-opacity="0.85"/>
<path d="M1993.2 827.0 C2073.2 824.5 2144.2 822.0 2234.2 822.0" fill="none" stroke="#598de0" stroke-width="1.6" stroke-opacity="0.85"/>
<path d="M1993.2 834.0 L2234.2 834.0" fill="none" stroke="#8e5ea3" stroke-width="1.6" stroke-opacity="0.85"/>
<path d="M1993.2 832.0 C2113.7 832.0 2113.7 852.0 2234.2 852.0" fill="none" stroke="#6cc7b5" stroke-width="1.6" stroke-opacity="0.85"/>
<path d="M1993.2 853.0 C2113.7 853.0 2113.7 840.0 2234.2 840.0" fill="none" stroke="#d78ac8" stroke-width="1.6" stroke-opacity="0.85"/>
<path d="M2234.2 809.4 C2354.7 809.4 2354.7 849.0 2475.1 849.0" fill="none" stroke="#8cc4ea" stroke-width="1.6" stroke-opacity="0.85"/>
<path d="M2234.2 853.0 L2475.1 825.3" fill="none" stroke="#598de0" stroke-width="1.6" stroke-opacity="0.85"/>
<path d="M2234.2 852.0 C2354.7 852.0 2354.7 832.0 2475.1 832.0" fill="none" stroke="#d8b04e" stroke-width="1.6" stroke-opacity="0.85"/>
<path d="M2234.2 833.0 L2475.1 832.0" fill="none" stroke="#6cc7b5" stroke-width="1.6" stroke-opacity="0.85"/>
<path d="M2234.2 835.0 L2475.1 833.0" fill="none" stroke="#a9c760" stroke-width="1.6" stroke-opacity="0.85"/>
<path d="M2234.2 840.0 C2354.7 840.0 2354.7 853.0 2475.1 853.0" fill="none" stroke="#d78ac8" stroke-width="1.6" stroke-opacity="0.85"/>
<path d="M2475.1 835.2 L2716.1 831.3" fill="none" stroke="#8e5ea3" stroke-width="1.6" stroke-opacity="0.85"/>
<path d="M2475.1 832.0 C2595.6 832.0 2595.6 850.0 2716.1 850.0" fill="none" stroke="#d8b04e" stroke-width="1.6" stroke-opacity="0.85"/>
<path d="M2475.1 852.3 L2716.1 852.3" fill="none" stroke="#6cc7b5" stroke-width="1.6" stroke-opacity="0.85"/>
<path d="M2475.1 853.0 L2716.1 851.0" fill="none" stroke="#d78ac8" stroke-width="1.6" stroke-opacity="0.85"/>
<path d="M2716.1 806.7 C2796.1 803.1 2867.0 799.5 2957.0 799.5" fill="none" stroke="#8cc4ea" stroke-width="1.6" stroke-opacity="0.85"/>
<path d="M2716.1 852.0 L2957.0 820.6" fill="none" stroke="#598de0" stroke-width="1.6" stroke-opacity="0.85"/>
<path d="M2716.1 829.0 C2836.6 829.0 2836.6 852.0 2957.0 852.0" fill="none" stroke="#d8b04e" stroke-width="1.6" stroke-opacity="0.85"/>
<path d="M2716.1 827.0 C2836.6 827.0 2836.6 853.0 2957.0 853.0" fill="none" stroke="#6cc7b5" stroke-width="1.6" stroke-opacity="0.85"/>
<path d="M2716.1 832.0 C2836.6 832.0 2836.6 854.0 2957.0 854.0" fill="none" stroke="#8e5ea3" stroke-width="1.6" stroke-opacity="0.85"/>
<path d="M2716.1 852.0 C2836.6 852.0 2836.6 835.0 2957.0 835.0" fill="none" stroke="#d78ac8" stroke-width="1.6" stroke-opacity="0.85"/>
<path d="M2957.0 799.5 C3077.5 799.5 3077.5 847.0 3198.0 847.0" fill="none" stroke="#8cc4ea" stroke-width="1.6" stroke-opacity="0.85"/>
<path d="M2957.0 829.3 L3198.0 829.3" fill="none" stroke="#8e5ea3" stroke-width="1.6" stroke-opacity="0.85"/>
<path d="M2957.0 831.0 C3077.5 831.0 3077.5 852.0 3198.0 852.0" fill="none" stroke="#d8b04e" stroke-width="1.6" stroke-opacity="0.85"/>
<path d="M2957.0 835.0 C3077.5 835.0 3077.5 853.0 3198.0 853.0" fill="none" stroke="#d78ac8" stroke-width="1.6" stroke-opacity="0.85"/>
<path d="M2957.0 833.0 C3077.5 833.0 3077.5 852.0 3198.0 852.0" fill="none" stroke="#a9c760" stroke-width="1.6" stroke-opacity="0.85"/>
<path d="M306.6 852.0 L547.5 852.5 L547.5 858 L306.6 858 Z" fill="#3b66bb" fill-opacity="0.06" stroke="none"/><path d="M306.6 852.0 L547.5 852.5" fill="none" stroke="#3b66bb" stroke-width="1.8" stroke-opacity="1"/>
<path d="M547.5 855.0 L788.5 852.0 L788.5 858 L547.5 858 Z" fill="#3b66bb" fill-opacity="0.06" stroke="none"/><path d="M547.5 855.0 L788.5 852.0" fill="none" stroke="#3b66bb" stroke-width="1.8" stroke-opacity="1"/>
<path d="M788.5 851.4 C909.0 851.4 909.0 816.5 1029.4 816.5 L1029.4 858 L788.5 858 Z" fill="#3b66bb" fill-opacity="0.06" stroke="none"/><path d="M788.5 851.4 C909.0 851.4 909.0 816.5 1029.4 816.5" fill="none" stroke="#3b66bb" stroke-width="1.8" stroke-opacity="1"/>
<path d="M1029.4 851.4 L1270.4 812.6 L1270.4 858 L1029.4 858 Z" fill="#3b66bb" fill-opacity="0.06" stroke="none"/><path d="M1029.4 851.4 L1270.4 812.6" fill="none" stroke="#3b66bb" stroke-width="1.8" stroke-opacity="1"/>
<path d="M1270.4 850.0 L1511.3 812.6 L1511.3 858 L1270.4 858 Z" fill="#3b66bb" fill-opacity="0.06" stroke="none"/><path d="M1270.4 850.0 L1511.3 812.6" fill="none" stroke="#3b66bb" stroke-width="1.8" stroke-opacity="1"/>
<path d="M1511.3 852.6 L1752.3 801.3 L1752.3 858 L1511.3 858 Z" fill="#3b66bb" fill-opacity="0.06" stroke="none"/><path d="M1511.3 852.6 L1752.3 801.3" fill="none" stroke="#3b66bb" stroke-width="1.8" stroke-opacity="1"/>
<path d="M1752.3 848.7 C1872.8 848.7 1872.8 802.0 1993.2 802.0 L1993.2 858 L1752.3 858 Z" fill="#3b66bb" fill-opacity="0.06" stroke="none"/><path d="M1752.3 848.7 C1872.8 848.7 1872.8 802.0 1993.2 802.0" fill="none" stroke="#3b66bb" stroke-width="1.8" stroke-opacity="1"/>
<path d="M1993.2 802.0 L2234.2 800.0 L2234.2 858 L1993.2 858 Z" fill="#3b66bb" fill-opacity="0.06" stroke="none"/><path d="M1993.2 802.0 L2234.2 800.0" fill="none" stroke="#3b66bb" stroke-width="1.8" stroke-opacity="1"/>
<path d="M2234.2 802.7 L2475.1 799.5 L2475.1 858 L2234.2 858 Z" fill="#3b66bb" fill-opacity="0.06" stroke="none"/><path d="M2234.2 802.7 L2475.1 799.5" fill="none" stroke="#3b66bb" stroke-width="1.8" stroke-opacity="1"/>
<path d="M2475.1 797.5 L2716.1 846.3 L2716.1 858 L2475.1 858 Z" fill="#3b66bb" fill-opacity="0.06" stroke="none"/><path d="M2475.1 797.5 L2716.1 846.3" fill="none" stroke="#3b66bb" stroke-width="1.8" stroke-opacity="1"/>
<path d="M2716.1 847.0 C2836.6 847.0 2836.6 790.8 2957.0 790.8 L2957.0 858 L2716.1 858 Z" fill="#3b66bb" fill-opacity="0.06" stroke="none"/><path d="M2716.1 847.0 C2836.6 847.0 2836.6 790.8 2957.0 790.8" fill="none" stroke="#3b66bb" stroke-width="1.8" stroke-opacity="1"/>
<path d="M2957.0 846.0 L3198.0 846.0 L3198.0 858 L2957.0 858 Z" fill="#3b66bb" fill-opacity="0.06" stroke="none"/><path d="M2957.0 846.0 L3198.0 846.0" fill="none" stroke="#3b66bb" stroke-width="1.8" stroke-opacity="1"/>
<path d="M307.8 834 V858" stroke="#3b66bb" stroke-width="1.5"/>
<path d="M547.5 822.7 V855" stroke="#3b66bb" stroke-width="2"/>
<path d="M788.5 819.6 V855" stroke="#3b66bb" stroke-width="2"/>
<path d="M1029.4 816.5 V852" stroke="#3b66bb" stroke-width="2"/>
<path d="M1270.4 810 V852" stroke="#3b66bb" stroke-width="2"/>
<path d="M1511.3 804.8 V852.6" stroke="#3b66bb" stroke-width="2"/>
<path d="M1752.3 801.3 V852" stroke="#3b66bb" stroke-width="2"/>
<path d="M1993.2 802 V852" stroke="#3b66bb" stroke-width="2"/>
<path d="M2234.2 800 V855" stroke="#3b66bb" stroke-width="2"/>
<path d="M2475.1 797.5 V855" stroke="#3b66bb" stroke-width="2"/>
<path d="M2716.1 793 V855" stroke="#3b66bb" stroke-width="2"/>
<path d="M2957.0 790.8 V855" stroke="#3b66bb" stroke-width="2"/>
<rect x="298" y="804.2" width="16" height="29.8" fill="#f3f3f3" stroke="#959595" stroke-width="1.8"/>
<path d="M303.9 811.2 V827 M308.1 811.2 V827" stroke="#8a8a8a" stroke-width="1.6"/>
<rect x="3190.5" y="804.2" width="16" height="29.8" fill="#f3f3f3" stroke="#959595" stroke-width="1.8"/>
<path d="M3196.4 811.2 V827 M3200.6 811.2 V827" stroke="#8a8a8a" stroke-width="1.6"/>
</g>
<g id="chart2">
<path d="M225 1085.5 H1648.8" stroke="#e4e4e6" stroke-width="2.2" fill="none"/>
<path d="M225 1187.6 H1648.8" stroke="#e4e4e6" stroke-width="2.2" fill="none"/>
<path d="M225 1287.6 H1648.8" stroke="#e4e4e6" stroke-width="2.2" fill="none"/>
<path d="M225 1386 H1648.8" stroke="#e4e4e6" stroke-width="2.2" fill="none"/>
<rect x="534.9" y="1023" width="32" height="17.5" rx="8.7" fill="#9ad3f2"/>
<text x="578.0" y="1038.5" font-size="28" font-weight="700" stroke="#2c3a4c" stroke-width="0.5" text-anchor="start" fill="#2c3a4c" textLength="131.0" lengthAdjust="spacingAndGlyphs">total_sent</text>
<rect x="749.8" y="1023" width="32" height="17.5" rx="8.7" fill="#bcd566"/>
<text x="792.5" y="1038.5" font-size="28" font-weight="700" stroke="#2c3a4c" stroke-width="0.5" text-anchor="start" fill="#2c3a4c" textLength="188.0" lengthAdjust="spacingAndGlyphs">total_bounced</text>
<rect x="1021.6" y="1023" width="32" height="17.5" rx="8.7" fill="#f4bd3f"/>
<text x="1063.5" y="1038.5" font-size="28" font-weight="700" stroke="#2c3a4c" stroke-width="0.5" text-anchor="start" fill="#2c3a4c" textLength="198.0" lengthAdjust="spacingAndGlyphs">total_delivered</text>
<rect x="256.9" y="1403.0" width="38" height="43.2" fill="#9ad3f2"/>
<rect x="256.9" y="1446.2" width="38" height="1.4" fill="#bcd566"/>
<rect x="256.9" y="1447.6" width="38" height="37.4" fill="#f4bd3f"/>
<text x="275.9" y="1388.0" font-size="20" font-weight="700" stroke="#777777" stroke-width="0.35" text-anchor="middle" fill="#777777" textLength="91.6" lengthAdjust="spacingAndGlyphs">16,942,814</text>
<rect x="359.1" y="1347.2" width="38" height="71.3" fill="#9ad3f2"/>
<rect x="359.1" y="1418.5" width="38" height="1.7" fill="#bcd566"/>
<rect x="359.1" y="1420.2" width="38" height="64.8" fill="#f4bd3f"/>
<text x="378.1" y="1332.2" font-size="20" font-weight="700" stroke="#777777" stroke-width="0.35" text-anchor="middle" fill="#777777" textLength="91.6" lengthAdjust="spacingAndGlyphs">27,945,570</text>
<rect x="461.0" y="1339.0" width="38" height="76.2" fill="#9ad3f2"/>
<rect x="461.0" y="1415.2" width="38" height="1.7" fill="#bcd566"/>
<rect x="461.0" y="1416.9" width="38" height="68.1" fill="#f4bd3f"/>
<text x="480.0" y="1324.0" font-size="20" font-weight="700" stroke="#777777" stroke-width="0.35" text-anchor="middle" fill="#777777" textLength="91.6" lengthAdjust="spacingAndGlyphs">29,577,059</text>
<rect x="562.9" y="1303.1" width="38" height="94.1" fill="#9ad3f2"/>
<rect x="562.9" y="1397.2" width="38" height="4.1" fill="#bcd566"/>
<rect x="562.9" y="1401.3" width="38" height="83.7" fill="#f4bd3f"/>
<text x="581.9" y="1288.1" font-size="20" font-weight="700" stroke="#777777" stroke-width="0.35" text-anchor="middle" fill="#777777" textLength="91.6" lengthAdjust="spacingAndGlyphs">36,976,901</text>
<rect x="665.1" y="1299.0" width="38" height="96.2" fill="#9ad3f2"/>
<rect x="665.1" y="1395.2" width="38" height="3.7" fill="#bcd566"/>
<rect x="665.1" y="1398.9" width="38" height="86.1" fill="#f4bd3f"/>
<text x="684.1" y="1284.0" font-size="20" font-weight="700" stroke="#777777" stroke-width="0.35" text-anchor="middle" fill="#777777" textLength="91.6" lengthAdjust="spacingAndGlyphs">37,815,334</text>
<rect x="767.0" y="1286.9" width="38" height="100.2" fill="#9ad3f2"/>
<rect x="767.0" y="1387.1" width="38" height="6.1" fill="#bcd566"/>
<rect x="767.0" y="1393.2" width="38" height="91.8" fill="#f4bd3f"/>
<text x="786.0" y="1271.9" font-size="20" font-weight="700" stroke="#777777" stroke-width="0.35" text-anchor="middle" fill="#777777" textLength="91.6" lengthAdjust="spacingAndGlyphs">40,370,132</text>
<rect x="866.9" y="1251.0" width="38" height="119.8" fill="#9ad3f2"/>
<rect x="866.9" y="1370.8" width="38" height="6.1" fill="#bcd566"/>
<rect x="866.9" y="1376.9" width="38" height="108.1" fill="#f4bd3f"/>
<text x="885.9" y="1236.0" font-size="20" font-weight="700" stroke="#777777" stroke-width="0.35" text-anchor="middle" fill="#777777" textLength="91.6" lengthAdjust="spacingAndGlyphs">47,431,520</text>
<rect x="969.0" y="1257.0" width="38" height="116.0" fill="#9ad3f2"/>
<rect x="969.0" y="1373.0" width="38" height="5.9" fill="#bcd566"/>
<rect x="969.0" y="1378.9" width="38" height="106.1" fill="#f4bd3f"/>
<text x="988.0" y="1242.0" font-size="20" font-weight="700" stroke="#777777" stroke-width="0.35" text-anchor="middle" fill="#777777" textLength="91.6" lengthAdjust="spacingAndGlyphs">46,200,883</text>
<rect x="1071.0" y="1217.0" width="38" height="137.8" fill="#9ad3f2"/>
<rect x="1071.0" y="1354.8" width="38" height="6.0" fill="#bcd566"/>
<rect x="1071.0" y="1360.8" width="38" height="124.2" fill="#f4bd3f"/>
<text x="1090.0" y="1202.0" font-size="20" font-weight="700" stroke="#777777" stroke-width="0.35" text-anchor="middle" fill="#777777" textLength="91.6" lengthAdjust="spacingAndGlyphs">54,166,948</text>
<rect x="1173.0" y="1214.9" width="38" height="137.8" fill="#9ad3f2"/>
<rect x="1173.0" y="1352.7" width="38" height="6.3" fill="#bcd566"/>
<rect x="1173.0" y="1359.0" width="38" height="126.0" fill="#f4bd3f"/>
<text x="1192.0" y="1199.9" font-size="20" font-weight="700" stroke="#777777" stroke-width="0.35" text-anchor="middle" fill="#777777" textLength="91.6" lengthAdjust="spacingAndGlyphs">54,615,344</text>
<rect x="1275.1" y="1219.2" width="38" height="135.6" fill="#9ad3f2"/>
<rect x="1275.1" y="1354.8" width="38" height="6.0" fill="#bcd566"/>
<rect x="1275.1" y="1360.8" width="38" height="124.2" fill="#f4bd3f"/>
<text x="1294.1" y="1204.2" font-size="20" font-weight="700" stroke="#777777" stroke-width="0.35" text-anchor="middle" fill="#777777" textLength="91.6" lengthAdjust="spacingAndGlyphs">53,983,971</text>
<rect x="1377.2" y="1174.7" width="38" height="158.2" fill="#9ad3f2"/>
<rect x="1377.2" y="1332.9" width="38" height="7.8" fill="#bcd566"/>
<rect x="1377.2" y="1340.7" width="38" height="144.3" fill="#f4bd3f"/>
<text x="1396.2" y="1159.7" font-size="20" font-weight="700" stroke="#777777" stroke-width="0.35" text-anchor="middle" fill="#777777" textLength="91.6" lengthAdjust="spacingAndGlyphs">62,780,581</text>
<rect x="1479.3" y="1157.0" width="38" height="167.8" fill="#9ad3f2"/>
<rect x="1479.3" y="1324.8" width="38" height="8.1" fill="#bcd566"/>
<rect x="1479.3" y="1332.9" width="38" height="152.1" fill="#f4bd3f"/>
<text x="1498.3" y="1142.0" font-size="20" font-weight="700" stroke="#777777" stroke-width="0.35" text-anchor="middle" fill="#777777" textLength="91.6" lengthAdjust="spacingAndGlyphs">66,199,699</text>
<rect x="1579.0" y="1460.8" width="38" height="13.7" fill="#9ad3f2"/>
<rect x="1579.0" y="1474.5" width="38" height="0.4" fill="#bcd566"/>
<rect x="1579.0" y="1474.9" width="38" height="10.1" fill="#f4bd3f"/>
<text x="1598.0" y="1445.8" font-size="20" font-weight="700" stroke="#777777" stroke-width="0.35" text-anchor="middle" fill="#777777" textLength="81.4" lengthAdjust="spacingAndGlyphs">5,341,101</text>
<path d="M225 1486.0 H1648.8" stroke="#c3cde6" stroke-width="2" fill="none"/>
<path d="M420 1486.0 V1505" stroke="#c3cde6" stroke-width="2" fill="none"/>
<text x="420.5" y="1526.7" font-size="25" text-anchor="middle" fill="#5f5f5f" textLength="89.1" lengthAdjust="spacingAndGlyphs">07. Dec</text>
<path d="M623.8 1486.0 V1505" stroke="#c3cde6" stroke-width="2" fill="none"/>
<text x="624.3" y="1526.7" font-size="25" text-anchor="middle" fill="#5f5f5f" textLength="89.1" lengthAdjust="spacingAndGlyphs">21. Dec</text>
<path d="M828 1486.0 V1505" stroke="#c3cde6" stroke-width="2" fill="none"/>
<text x="828.5" y="1526.7" font-size="25" text-anchor="middle" fill="#5f5f5f" textLength="84.8" lengthAdjust="spacingAndGlyphs">04. Jan</text>
<path d="M1030 1486.0 V1505" stroke="#c3cde6" stroke-width="2" fill="none"/>
<text x="1030.5" y="1526.7" font-size="25" text-anchor="middle" fill="#5f5f5f" textLength="84.8" lengthAdjust="spacingAndGlyphs">18. Jan</text>
<path d="M1227.8 1486.0 V1505" stroke="#c3cde6" stroke-width="2" fill="none"/>
<text x="1228.3" y="1526.7" font-size="25" text-anchor="middle" fill="#5f5f5f" textLength="87.7" lengthAdjust="spacingAndGlyphs">01. Feb</text>
<path d="M1422 1486.0 V1505" stroke="#c3cde6" stroke-width="2" fill="none"/>
<text x="1422.5" y="1526.7" font-size="25" text-anchor="middle" fill="#5f5f5f" textLength="87.7" lengthAdjust="spacingAndGlyphs">15. Feb</text>
<text x="194.2" y="1182.4" font-size="22" text-anchor="end" fill="#5f5f5f" textLength="43.7" lengthAdjust="spacingAndGlyphs">60M</text>
<text x="194.2" y="1282.4" font-size="22" text-anchor="end" fill="#5f5f5f" textLength="43.7" lengthAdjust="spacingAndGlyphs">40M</text>
<text x="194.2" y="1380.8" font-size="22" text-anchor="end" fill="#5f5f5f" textLength="43.7" lengthAdjust="spacingAndGlyphs">20M</text>
<text x="194.2" y="1480.8" font-size="22" text-anchor="end" fill="#5f5f5f" textLength="12.5" lengthAdjust="spacingAndGlyphs">0</text>
<rect x="224" y="1588" width="1424.2" height="80" fill="#d5dbeb" stroke="#c4c4c5" stroke-width="2"/>
<path d="M224.8 1648.5 C233.6 1647.3 260.0 1643.4 277.6 1641.4 C295.2 1639.4 307.1 1637.7 330.4 1636.5 C353.7 1635.3 395.1 1635.2 417.4 1634.5 C439.7 1633.8 445.9 1633.3 464.0 1632.0 C482.1 1630.7 505.3 1627.9 526.0 1626.8 C546.7 1625.7 559.5 1625.6 588.0 1625.2 C616.5 1624.8 666.3 1624.8 697.0 1624.3 C727.7 1623.8 751.3 1623.0 772.0 1622.0 C792.7 1621.0 805.0 1619.6 821.0 1618.4 C837.0 1617.2 852.2 1615.6 867.7 1615.0 C883.2 1614.4 892.0 1614.8 914.0 1615.0 C936.0 1615.2 973.8 1617.7 1000.0 1616.5 C1026.2 1615.3 1050.3 1609.7 1071.0 1608.0 C1091.7 1606.3 1094.2 1606.7 1124.0 1606.6 C1153.8 1606.5 1216.3 1607.0 1250.0 1607.2 C1283.7 1607.4 1300.4 1608.6 1326.0 1607.5 C1351.6 1606.4 1380.4 1602.4 1403.7 1600.4 C1427.0 1598.4 1442.5 1596.7 1465.8 1595.7 C1489.1 1594.7 1528.0 1593.9 1543.5 1594.2 C1559.0 1594.5 1551.2 1594.2 1559.0 1597.3 C1566.8 1600.4 1579.7 1606.1 1590.0 1612.8 C1600.3 1619.5 1611.4 1629.9 1621.0 1637.6 C1630.6 1645.3 1643.1 1655.3 1647.5 1658.8 L1647.5 1667 L224.8 1667 Z" fill="#8a9bbd" fill-opacity="0.1"/>
<path d="M224.8 1650.3 C233.6 1649.1 260.0 1645.2 277.6 1643.2 C295.2 1641.2 307.1 1639.5 330.4 1638.3 C353.7 1637.1 395.1 1637.0 417.4 1636.3 C439.7 1635.5 445.9 1635.1 464.0 1633.8 C482.1 1632.5 505.3 1629.7 526.0 1628.6 C546.7 1627.5 559.5 1627.4 588.0 1627.0 C616.5 1626.6 666.3 1626.6 697.0 1626.1 C727.7 1625.6 751.3 1624.8 772.0 1623.8 C792.7 1622.8 805.0 1621.4 821.0 1620.2 C837.0 1619.0 852.2 1617.4 867.7 1616.8 C883.2 1616.2 892.0 1616.5 914.0 1616.8 C936.0 1617.0 973.8 1619.5 1000.0 1618.3 C1026.2 1617.1 1050.3 1611.5 1071.0 1609.8 C1091.7 1608.1 1094.2 1608.5 1124.0 1608.4 C1153.8 1608.3 1216.3 1608.8 1250.0 1609.0 C1283.7 1609.2 1300.4 1610.4 1326.0 1609.3 C1351.6 1608.2 1380.4 1604.2 1403.7 1602.2 C1427.0 1600.2 1442.5 1598.5 1465.8 1597.5 C1489.1 1596.5 1528.0 1595.7 1543.5 1596.0 C1559.0 1596.3 1551.2 1596.0 1559.0 1599.1 C1566.8 1602.2 1579.7 1607.9 1590.0 1614.6 C1600.3 1621.3 1611.4 1631.7 1621.0 1639.4 C1630.6 1647.1 1643.1 1657.1 1647.5 1660.6" fill="none" stroke="#d6aa52" stroke-width="1.7"/>
<path d="M224.8 1648.5 C233.6 1647.3 260.0 1643.4 277.6 1641.4 C295.2 1639.4 307.1 1637.7 330.4 1636.5 C353.7 1635.3 395.1 1635.2 417.4 1634.5 C439.7 1633.8 445.9 1633.3 464.0 1632.0 C482.1 1630.7 505.3 1627.9 526.0 1626.8 C546.7 1625.7 559.5 1625.6 588.0 1625.2 C616.5 1624.8 666.3 1624.8 697.0 1624.3 C727.7 1623.8 751.3 1623.0 772.0 1622.0 C792.7 1621.0 805.0 1619.6 821.0 1618.4 C837.0 1617.2 852.2 1615.6 867.7 1615.0 C883.2 1614.4 892.0 1614.8 914.0 1615.0 C936.0 1615.2 973.8 1617.7 1000.0 1616.5 C1026.2 1615.3 1050.3 1609.7 1071.0 1608.0 C1091.7 1606.3 1094.2 1606.7 1124.0 1606.6 C1153.8 1606.5 1216.3 1607.0 1250.0 1607.2 C1283.7 1607.4 1300.4 1608.6 1326.0 1607.5 C1351.6 1606.4 1380.4 1602.4 1403.7 1600.4 C1427.0 1598.4 1442.5 1596.7 1465.8 1595.7 C1489.1 1594.7 1528.0 1593.9 1543.5 1594.2 C1559.0 1594.5 1551.2 1594.2 1559.0 1597.3 C1566.8 1600.4 1579.7 1606.1 1590.0 1612.8 C1600.3 1619.5 1611.4 1629.9 1621.0 1637.6 C1630.6 1645.3 1643.1 1655.3 1647.5 1658.8" fill="none" stroke="#7fb5e6" stroke-width="1.7"/>
<path d="M224.8 1666 C700 1665 1000 1663.2 1300 1663.2 C1450 1663.2 1560 1664.5 1647.5 1666.3" fill="none" stroke="#a9c760" stroke-width="1.8"/>
<path d="M277.6 1588.5 V1667" stroke="#c0c5d2" stroke-width="1.5"/>
<text x="286.6" y="1659.0" font-size="22" text-anchor="start" fill="#8f96ab" textLength="76.1" lengthAdjust="spacingAndGlyphs">Dec '14</text>
<path d="M772 1588.5 V1667" stroke="#c0c5d2" stroke-width="1.5"/>
<text x="781.0" y="1659.0" font-size="22" text-anchor="start" fill="#8f96ab" textLength="72.4" lengthAdjust="spacingAndGlyphs">Jan '15</text>
<path d="M1250.3 1588.5 V1667" stroke="#c0c5d2" stroke-width="1.5"/>
<text x="1259.3" y="1659.0" font-size="22" text-anchor="start" fill="#8f96ab" textLength="74.9" lengthAdjust="spacingAndGlyphs">Feb '15</text>
<rect x="215.9" y="1612" width="16" height="30" fill="#f3f3f3" stroke="#959595" stroke-width="1.8"/>
<path d="M221.8 1619.2 V1635 M226.0 1619.2 V1635" stroke="#8a8a8a" stroke-width="1.6"/>
<rect x="1640.4" y="1612" width="16" height="30" fill="#f3f3f3" stroke="#959595" stroke-width="1.8"/>
<path d="M1646.3000000000002 1619.2 V1635 M1650.5 1619.2 V1635" stroke="#8a8a8a" stroke-width="1.6"/>
</g>
<g id="chart3">
<path d="M2172.7 1086.5 V1620.7" stroke="#e4e4e6" stroke-width="2.2" fill="none"/>
<path d="M2311.9 1086.5 V1620.7" stroke="#e4e4e6" stroke-width="2.2" fill="none"/>
<path d="M2451.2 1086.5 V1620.7" stroke="#e4e4e6" stroke-width="2.2" fill="none"/>
<path d="M2590.4 1086.5 V1620.7" stroke="#e4e4e6" stroke-width="2.2" fill="none"/>
<path d="M2729.6 1086.5 V1620.7" stroke="#e4e4e6" stroke-width="2.2" fill="none"/>
<path d="M2868.8 1086.5 V1620.7" stroke="#e4e4e6" stroke-width="2.2" fill="none"/>
<path d="M3008.0 1086.5 V1620.7" stroke="#e4e4e6" stroke-width="2.2" fill="none"/>
<path d="M3147.3 1086.5 V1620.7" stroke="#e4e4e6" stroke-width="2.2" fill="none"/>
<rect x="2312" y="1023" width="32" height="17.5" rx="8.7" fill="#9ad3f2"/>
<text x="2355.0" y="1038.5" font-size="28" font-weight="700" stroke="#2c3a4c" stroke-width="0.5" text-anchor="start" fill="#2c3a4c" textLength="234.0" lengthAdjust="spacingAndGlyphs">total_conversions</text>
<rect x="2033.8" y="1110.9" width="1107.9" height="27.6" fill="#9ad3f2"/>
<path d="M2014 1124.7 H2033.5" stroke="#c3cde6" stroke-width="2"/>
<text x="2003.2" y="1132.9" font-size="26" text-anchor="end" fill="#5f5f5f" textLength="102.5" lengthAdjust="spacingAndGlyphs">Rewards</text>
<rect x="2033.8" y="1187.2" width="996.4" height="27.6" fill="#9ad3f2"/>
<path d="M2014 1201.0 H2033.5" stroke="#c3cde6" stroke-width="2"/>
<text x="2003.2" y="1209.2" font-size="26" text-anchor="end" fill="#5f5f5f" textLength="300.6" lengthAdjust="spacingAndGlyphs">More artists, more music</text>
<rect x="2033.8" y="1263.5" width="900.0" height="27.6" fill="#9ad3f2"/>
<path d="M2014 1277.2 H2033.5" stroke="#c3cde6" stroke-width="2"/>
<text x="2003.2" y="1285.5" font-size="26" text-anchor="end" fill="#5f5f5f" textLength="243.8" lengthAdjust="spacingAndGlyphs">30% off Limited Sale</text>
<rect x="2033.8" y="1339.8" width="210.8" height="27.6" fill="#9ad3f2"/>
<path d="M2014 1353.5 H2033.5" stroke="#c3cde6" stroke-width="2"/>
<text x="2003.2" y="1361.8" font-size="26" text-anchor="end" fill="#5f5f5f" textLength="129.8" lengthAdjust="spacingAndGlyphs">Newsletter</text>
<rect x="2033.8" y="1416.0" width="190.8" height="27.6" fill="#9ad3f2"/>
<path d="M2014 1429.8 H2033.5" stroke="#c3cde6" stroke-width="2"/>
<text x="2003.2" y="1438.0" font-size="26" text-anchor="end" fill="#5f5f5f" textLength="97.2" lengthAdjust="spacingAndGlyphs">Account</text>
<rect x="2033.8" y="1492.4" width="160.8" height="27.6" fill="#9ad3f2"/>
<path d="M2014 1506.2 H2033.5" stroke="#c3cde6" stroke-width="2"/>
<text x="2003.2" y="1514.4" font-size="26" text-anchor="end" fill="#5f5f5f" textLength="51.2" lengthAdjust="spacingAndGlyphs">Trial</text>
<rect x="2033.8" y="1568.7" width="138.6" height="27.6" fill="#9ad3f2"/>
<path d="M2014 1582.5 H2033.5" stroke="#c3cde6" stroke-width="2"/>
<text x="2003.2" y="1590.7" font-size="26" text-anchor="end" fill="#5f5f5f" textLength="70.5" lengthAdjust="spacingAndGlyphs">Order</text>
<path d="M2033.5 1086.5 V1620.7" stroke="#c3cde6" stroke-width="2" fill="none"/>
<text x="2033.5" y="1658.4" font-size="22" text-anchor="middle" fill="#5f5f5f" textLength="12.5" lengthAdjust="spacingAndGlyphs">0</text>
<text x="2172.7" y="1658.4" font-size="22" text-anchor="middle" fill="#5f5f5f" textLength="48.7" lengthAdjust="spacingAndGlyphs">100k</text>
<text x="2311.9" y="1658.4" font-size="22" text-anchor="middle" fill="#5f5f5f" textLength="48.7" lengthAdjust="spacingAndGlyphs">200k</text>
<text x="2451.2" y="1658.4" font-size="22" text-anchor="middle" fill="#5f5f5f" textLength="48.7" lengthAdjust="spacingAndGlyphs">300k</text>
<text x="2590.4" y="1658.4" font-size="22" text-anchor="middle" fill="#5f5f5f" textLength="48.7" lengthAdjust="spacingAndGlyphs">400k</text>
<text x="2729.6" y="1658.4" font-size="22" text-anchor="middle" fill="#5f5f5f" textLength="48.7" lengthAdjust="spacingAndGlyphs">500k</text>
<text x="2868.8" y="1658.4" font-size="22" text-anchor="middle" fill="#5f5f5f" textLength="48.7" lengthAdjust="spacingAndGlyphs">600k</text>
<text x="3008.0" y="1658.4" font-size="22" text-anchor="middle" fill="#5f5f5f" textLength="48.7" lengthAdjust="spacingAndGlyphs">700k</text>
<text x="3147.3" y="1658.4" font-size="22" text-anchor="middle" fill="#5f5f5f" textLength="48.7" lengthAdjust="spacingAndGlyphs">800k</text>
</g>
<path d="M3212 869 L3198 883 M3212 872.5 L3201.5 883 M3212 876 L3205 883 M3212 879.5 L3208.5 883" stroke="#7fb0e4" stroke-width="2" stroke-dasharray="2 1.2"/>
<path d="M1660.5 1677 L1646.5 1691 M1660.5 1680.5 L1650.0 1691 M1660.5 1684 L1653.5 1691 M1660.5 1687.5 L1657.0 1691" stroke="#7fb0e4" stroke-width="2" stroke-dasharray="2 1.2"/>
<path d="M3212 1677 L3198 1691 M3212 1680.5 L3201.5 1691 M3212 1684 L3205 1691 M3212 1687.5 L3208.5 1691" stroke="#7fb0e4" stroke-width="2" stroke-dasharray="2 1.2"/>
<path d="M0 1690 A10 10 0 0 0 7 1700 H0 Z" fill="#000"/>
</svg>
</body></html>
